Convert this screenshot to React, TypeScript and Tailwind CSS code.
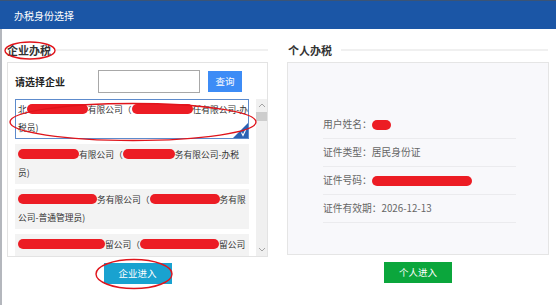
import { ReactNode } from "react";

const FONT = "font-['Noto_Sans_CJK_SC','Noto_Sans',sans-serif]";

// redacted text: a red smear, nothing readable behind it
function Redact({ w }: { w: string }) {
    return (
        <span className={`inline-block align-[-1px] h-[10px] bg-[#ec1c24] rounded-[5px] blur-[0.4px] ${w}`} />
    );
}

function Line({ children }: { children: ReactNode }) {
    return <div className="whitespace-nowrap h-[18px] leading-[18px]">{children}</div>;
}

type Item = { l1: ReactNode; l2: ReactNode };

const items: Item[] = [
    {
        l1: (<>北<Redact w="w-[61px]" />有限公司（<Redact w="w-[61px]" />任有限公司-办</>),
        l2: "税员)",
    },
    {
        l1: (<><Redact w="w-[61px]" />有限公司（<Redact w="w-[52px]" />务有限公司-办税</>),
        l2: "员)",
    },
    {
        l1: (<><Redact w="w-[79px]" />务有限公司（<Redact w="w-[70px]" />务有限</>),
        l2: "公司-普通管理员)",
    },
    {
        l1: (<><Redact w="w-[87px]" />留公司（<Redact w="w-[79px]" />留公司</>),
        l2: "",
    },
];

const rows: { label: string; value: ReactNode }[] = [
    { label: "用户姓名：", value: <Redact w="w-[19px]" /> },
    { label: "证件类型：", value: "居民身份证" },
    { label: "证件号码：", value: <Redact w="w-[100px]" /> },
    { label: "证件有效期：", value: "2026-12-13" },
];

export default function App() {
    return (
        <div className={`relative w-[556px] h-[305px] bg-white overflow-hidden ${FONT}`}>
            {/* top bar */}
            <div className="h-[1px] bg-[#3b5476]" />
            <div className="h-[28px] bg-[#1b56a6] flex items-center pl-[14px] text-white text-[10px]">
                办税身份选择
            </div>

            <div className="h-[276px] border-l-2 border-[#b4b7bd] pl-[5px] pr-[7px] pt-[9px] flex gap-[19px]">
                {/* 企业办税 */}
                <div className="w-[261px] flex flex-col">
                    <div className="h-[24px] flex items-center">
                        <span className="text-[11px] font-bold text-[#333] leading-none">企业办税</span>
                        <div className="ml-[5px] flex-1 h-[2px] bg-[#f0f0f0]" />
                    </div>
                    <div className="h-[195px] border border-[#e3e3e3] pl-[7px] pt-[7px] flex flex-col">
                        <div className="flex items-center h-[23px]">
                            <span className="w-[83px] text-[10px] font-bold text-[#222]">请选择企业</span>
                            <div className="w-[102px] h-[23px] border border-[#a8a8a8] bg-white" />
                            <button className="ml-[8px] w-[34px] h-[21px] bg-[#3d8cf6] text-white text-[9.5px]">
                                查询
                            </button>
                        </div>
                        <div className="mt-[6px] h-[157px] flex overflow-hidden">
                            <div className="w-[234px] flex flex-col gap-[5px] text-[8.75px] text-[#333]">
                                {items.map((it, i) => (
                                    <div
                                        key={i}
                                        className={`relative shrink-0 border py-[1px] pl-[2px] ${i === 0 ? "bg-white border-[#5d8bcc]" : "bg-[#f3f3f3] border-transparent"}`}
                                    >
                                        <Line>{it.l1}</Line>
                                        <Line>{it.l2}</Line>
                                        {i === 0 && (
                                            <svg className="absolute right-0 bottom-0" width="15" height="15" viewBox="0 0 15 15">
                                                <path d="M15 0 L15 15 L0 15 Z" fill="#2a62b3" />
                                                <path d="M8.5 9.5 L10 12.5 L12.8 6.5" stroke="white" strokeWidth="1.1" fill="none" />
                                            </svg>
                                        )}
                                    </div>
                                ))}
                            </div>
                            <div className="ml-[7px] w-[11px] bg-[#f0f0f0] flex flex-col items-center">
                                <svg className="mt-[3px]" width="8" height="6" viewBox="0 0 8 6">
                                    <path d="M1 5 L4 2 L7 5" stroke="#a3a3a3" strokeWidth="1" fill="none" />
                                </svg>
                                <div className="mt-[4px] w-[11px] h-[9px] bg-[#cdcdcd]" />
                                <div className="flex-1" />
                                <svg className="mb-[3px]" width="8" height="6" viewBox="0 0 8 6">
                                    <path d="M1 1 L4 4 L7 1" stroke="#a3a3a3" strokeWidth="1" fill="none" />
                                </svg>
                            </div>
                        </div>
                    </div>
                    <div className="mt-[6px] flex justify-center">
                        <button className="w-[68px] h-[21px] bg-[#19a2d0] text-white text-[9.5px]">企业进入</button>
                    </div>
                </div>

                {/* 个人办税 */}
                <div className="w-[262px] flex flex-col">
                    <div className="h-[24px] flex items-center pl-[1px]">
                        <span className="text-[11px] font-bold text-[#333] leading-none">个人办税</span>
                        <div className="ml-[9px] flex-1 h-[2px] bg-[#f0f0f0] mr-[1px]" />
                    </div>
                    <div className="h-[193px] border border-[#e5e5e5] bg-[#f8f8fb] pt-[48px] pl-[35px]">
                        <div className="w-[193px] text-[9.75px] text-[#666]">
                            {rows.map((r) => (
                                <div key={r.label} className="h-[28px] flex items-center border-b border-[#ebebee] whitespace-nowrap">
                                    {r.label}
                                    {r.value}
                                </div>
                            ))}
                        </div>
                    </div>
                    <div className="mt-[7px] flex justify-center">
                        <button className="w-[68px] h-[21px] bg-[#0ba63c] text-white text-[9.5px]">个人进入</button>
                    </div>
                </div>
            </div>

            {/* red annotations */}
            <svg className="absolute inset-0 pointer-events-none" width="556" height="305">
                <ellipse cx="30" cy="50.5" rx="25" ry="8.5" stroke="#e0141b" strokeWidth="1.4" fill="none" />
                <ellipse cx="133" cy="122" rx="123" ry="18.5" stroke="#e0141b" strokeWidth="1.4" fill="none" />
                <ellipse cx="134" cy="274" rx="38" ry="14.5" stroke="#e0141b" strokeWidth="1.4" fill="none" />
            </svg>
        </div>
    );
}
